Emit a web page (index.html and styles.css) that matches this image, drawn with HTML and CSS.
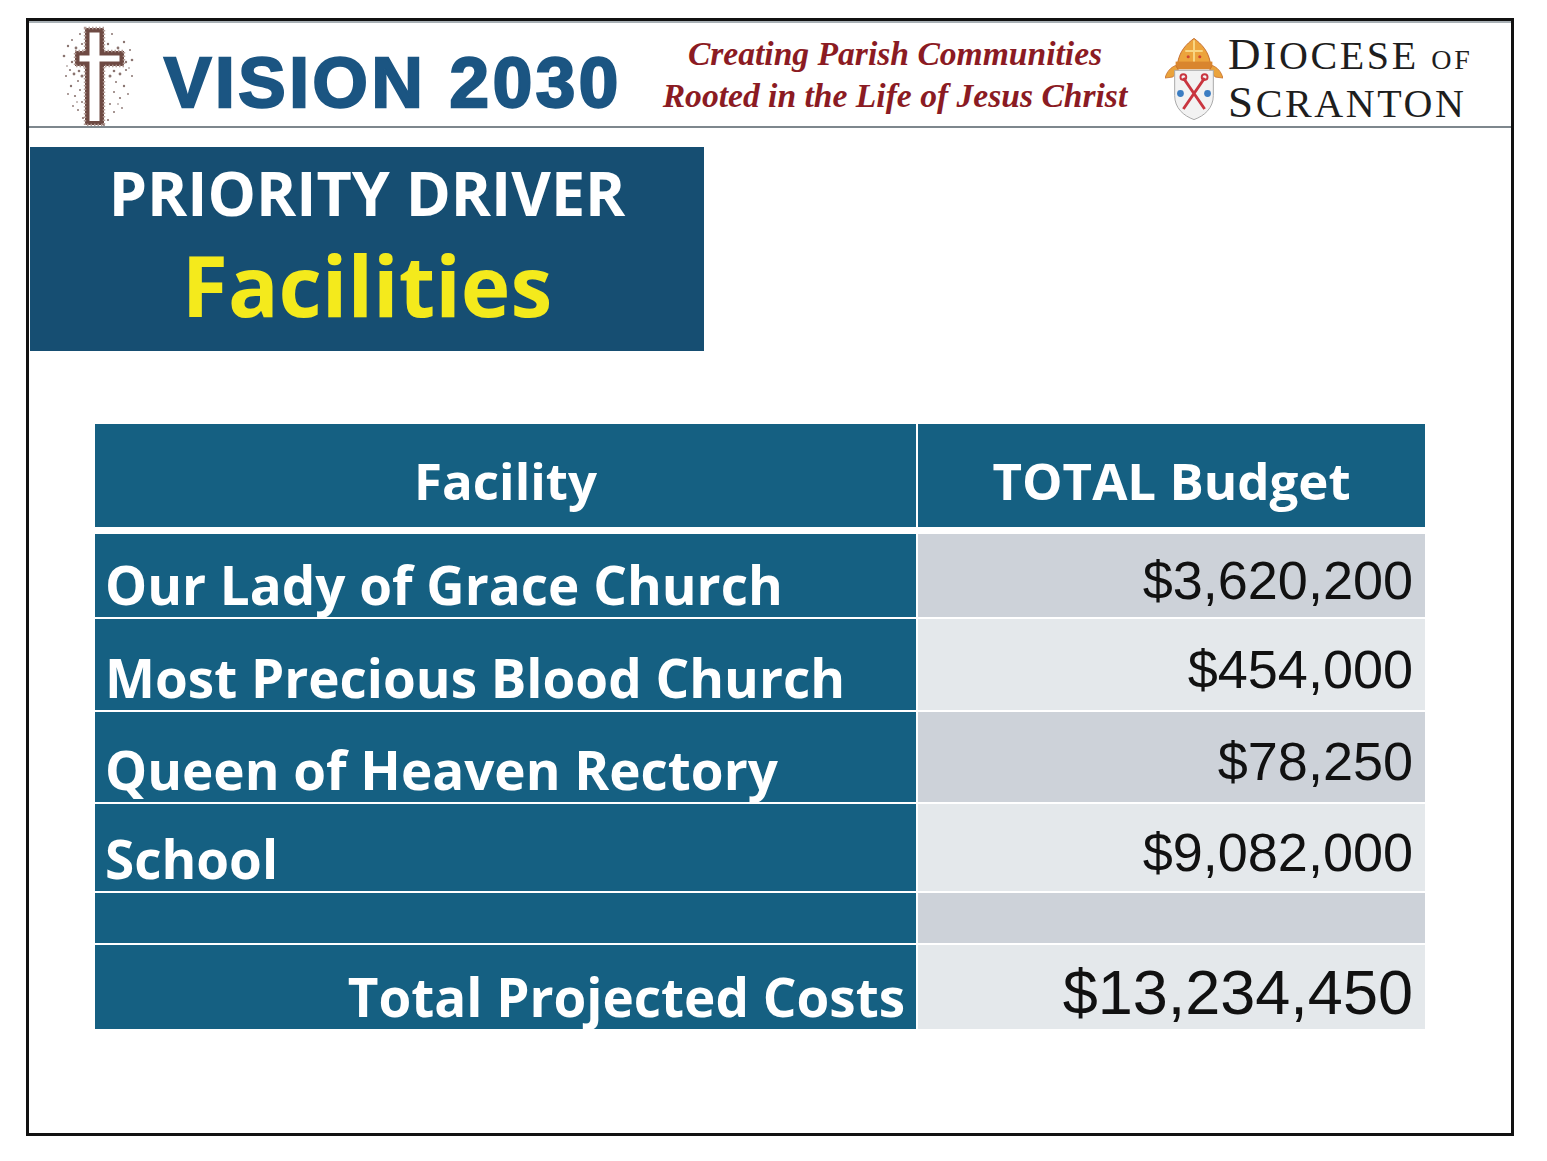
FILE: index.html
```html
<!DOCTYPE html>
<html lang="en">
<head>
<meta charset="utf-8">
<title>Vision 2030 - Priority Driver: Facilities</title>
<link rel="stylesheet" href="styles.css">
</head>
<body>
<div class="frame">
  <header class="banner">
    <div class="brand">
      <svg class="cross" viewBox="0 0 80 100" width="80" height="100" aria-hidden="true">
        <g fill="#8a7470">
          <circle cx="10" cy="20" r="1.2"/><circle cx="14" cy="14" r="1"/><circle cx="6" cy="30" r="1.3"/>
          <circle cx="12" cy="44" r="1.1"/><circle cx="8" cy="50" r="1"/><circle cx="16" cy="48" r="1.4"/>
          <circle cx="20" cy="55" r="1"/><circle cx="13" cy="60" r="1.2"/><circle cx="22" cy="64" r="1"/>
          <circle cx="17" cy="70" r="1.1"/><circle cx="24" cy="76" r="1"/><circle cx="10" cy="68" r="0.9"/>
          <circle cx="20" cy="84" r="1"/><circle cx="25" cy="92" r="1.1"/><circle cx="15" cy="80" r="0.9"/>
          <circle cx="66" cy="16" r="1.2"/><circle cx="72" cy="24" r="1"/><circle cx="74" cy="34" r="1.3"/>
          <circle cx="68" cy="44" r="1.1"/><circle cx="74" cy="50" r="1"/><circle cx="62" cy="48" r="1.4"/>
          <circle cx="58" cy="56" r="1"/><circle cx="66" cy="60" r="1.2"/><circle cx="56" cy="66" r="1"/>
          <circle cx="62" cy="72" r="1.1"/><circle cx="52" cy="78" r="1"/><circle cx="70" cy="68" r="0.9"/>
          <circle cx="56" cy="86" r="1"/><circle cx="50" cy="94" r="1.1"/><circle cx="64" cy="82" r="0.9"/>
          <circle cx="22" cy="8" r="1"/><circle cx="54" cy="8" r="1"/><circle cx="50" cy="18" r="1.2"/>
          <circle cx="24" cy="18" r="1.1"/><circle cx="30" cy="98" r="1"/><circle cx="46" cy="99" r="1"/>
          <circle cx="18" cy="22" r="1.4"/><circle cx="60" cy="22" r="1.4"/><circle cx="14" cy="36" r="1.2"/>
          <circle cx="68" cy="36" r="1.2"/><circle cx="21" cy="45" r="1.3"/><circle cx="56" cy="45" r="1.3"/>
          <circle cx="24" cy="50" r="1.5"/><circle cx="52" cy="50" r="1.5"/><circle cx="19" cy="76" r="0.8"/>
          <circle cx="60" cy="78" r="0.8"/><circle cx="9" cy="40" r="0.8"/><circle cx="71" cy="42" r="0.8"/>
        </g>
        <path d="M27 2 H46 V25 H66 V40 H46 V99 H27 V40 H17 V25 H27 Z" fill="#6e4a43"/>
        <path d="M27 2 H46 V25 H66 V40 H46 V99 H27 V40 H17 V25 H27 Z" fill="none" stroke="#b29c96" stroke-width="2.4" stroke-dasharray="1.5 2"/>
        <path d="M31.5 6.5 H41.5 V29.5 H61.5 V35.5 H41.5 V95 H31.5 V35.5 H21.5 V29.5 H31.5 Z" fill="#ffffff"/>
      </svg>
      <span class="vision">VISION 2030</span>
    </div>
    <div class="tagline">
      <div>Creating Parish Communities</div>
      <div>Rooted in the Life of Jesus Christ</div>
    </div>
    <div class="diocese">
      <svg class="shield" viewBox="0 0 60 86" width="58" height="84" aria-hidden="true">
        <path d="M30 1 C22 7 15 14 13 27 L47 27 C45 14 38 7 30 1 Z" fill="#eca43d" stroke="#c46b2a" stroke-width="1"/>
        <path d="M30 3 L30 27 M21 14 L39 14" stroke="#f8d684" stroke-width="2"/>
        <circle cx="24" cy="20" r="1.6" fill="#d0452f"/><circle cx="36" cy="20" r="1.6" fill="#d0452f"/>
        <rect x="11" y="25" width="38" height="8" fill="#d9852e"/>
        <path d="M11 29 C6 31 2 35 0 42 L8 41 L14 34 Z" fill="#eaa33c" stroke="#c46b2a" stroke-width="0.8"/>
        <path d="M49 29 C54 31 58 35 60 42 L52 41 L46 34 Z" fill="#eaa33c" stroke="#c46b2a" stroke-width="0.8"/>
        <path d="M10 34 H50 V60 C50 73 41 81 30 85 C19 81 10 73 10 60 Z" fill="#f2f2f2" stroke="#a7a7a7" stroke-width="1"/>
        <path d="M19 42 L41 74 M41 42 L19 74" stroke="#c9353f" stroke-width="3"/>
        <circle cx="19" cy="41" r="3" fill="none" stroke="#c9353f" stroke-width="2"/>
        <circle cx="41" cy="41" r="3" fill="none" stroke="#c9353f" stroke-width="2"/>
        <circle cx="16" cy="58" r="3.5" fill="#3b7dc2"/>
        <circle cx="44" cy="58" r="3.5" fill="#3b7dc2"/>
      </svg>
      <div class="diocese-name">
        <div><span class="cap">D</span>IOCESE <span class="sc">OF</span></div>
        <div><span class="cap">S</span>CRANTON</div>
      </div>
    </div>
  </header>

  <section class="driver">
    <div class="driver-label">PRIORITY DRIVER</div>
    <div class="driver-name">Facilities</div>
  </section>

  <section class="budget">
    <div class="thead">
      <div class="th">Facility</div>
      <div class="th">TOTAL Budget</div>
    </div>
    <div class="tbody">
      <div class="name">Our Lady of Grace Church</div>
      <div class="amount dark">$3,620,200</div>
      <div class="name">Most Precious Blood Church</div>
      <div class="amount light">$454,000</div>
      <div class="name">Queen of Heaven Rectory</div>
      <div class="amount dark">$78,250</div>
      <div class="name">School</div>
      <div class="amount light">$9,082,000</div>
      <div class="name"></div>
      <div class="amount dark"></div>
      <div class="name total-label">Total Projected Costs</div>
      <div class="amount light total">$13,234,450</div>
    </div>
  </section>
</div>
</body>
</html>
```

FILE: styles.css
```css
html, body {
  margin: 0;
  padding: 0;
  background: #ffffff;
}

.frame {
  box-sizing: border-box;
  margin: 18px 0 0 26px;
  width: 1488px;
  height: 1118px;
  border: 3px solid #111111;
  background: #ffffff;
}

/* ---------- banner ---------- */
.banner {
  box-sizing: border-box;
  height: 107px;
  border-top: 2px solid #a9b1b6;
  border-bottom: 2px solid #7e878d;
  display: flex;
  align-items: flex-start;
}

.brand {
  width: 631px;
  display: flex;
  align-items: flex-start;
}

.cross {
  margin: 3px 0 0 29px;
  flex: none;
}

.vision {
  margin: 24px 0 0 26px;
  font-family: "Liberation Sans", Arial, sans-serif;
  font-weight: 700;
  font-size: 71px;
  line-height: 71px;
  letter-spacing: 3.6px;
  color: #1b5582;
  -webkit-text-stroke: 2.4px #1b5582;
  white-space: nowrap;
}

.tagline {
  width: 470px;
  margin-top: 10px;
  text-align: center;
  font-family: "Liberation Serif", "Times New Roman", serif;
  font-style: italic;
  font-weight: 700;
  font-size: 33.6px;
  line-height: 42px;
  color: #8b1b23;
  white-space: nowrap;
}

.diocese {
  display: flex;
  align-items: flex-start;
  margin-left: 35px;
}

.shield {
  margin-top: 14px;
  flex: none;
}

.diocese-name {
  margin: 10px 0 0 5px;
  font-family: "Liberation Serif", "Times New Roman", serif;
  font-size: 40px;
  line-height: 43px;
  letter-spacing: 2.6px;
  color: #1e1e1e;
  white-space: nowrap;
}

.diocese-name .cap {
  font-size: 45px;
}

.diocese-name .sc {
  font-size: 28px;
}

/* ---------- priority driver ---------- */
.driver {
  box-sizing: border-box;
  margin: 19px 0 0 1px;
  width: 674px;
  height: 204px;
  padding-top: 8px;
  background: #164e72;
  text-align: center;
  font-family: "Open Sans", "Noto Sans", sans-serif;
  font-weight: 700;
}

.driver-label {
  font-size: 61px;
  line-height: 76px;
  color: #ffffff;
}

.driver-name {
  font-size: 84px;
  line-height: 107px;
  color: #f4ea1c;
}

/* ---------- budget table ---------- */
.budget {
  margin: 73px 0 0 66px;
  width: 1330px;
  font-family: "Open Sans", "Noto Sans", sans-serif;
}

.thead,
.tbody {
  display: grid;
  grid-template-columns: 821px 507px;
  column-gap: 2px;
}

.thead {
  height: 103px;
}

.th {
  display: flex;
  align-items: center;
  justify-content: center;
  padding-top: 8px;
  box-sizing: border-box;
  background: #156082;
  color: #ffffff;
  font-weight: 700;
  font-size: 51px;
}

.tbody {
  margin-top: 7px;
  row-gap: 2px;
  grid-template-rows: 83px 91px 90px 87px 50px 84px;
}

.name {
  display: flex;
  align-items: flex-end;
  box-sizing: border-box;
  padding: 0 11px 6px 10px;
  background: #156082;
  color: #ffffff;
  font-weight: 700;
  font-size: 53px;
  line-height: 1;
  white-space: nowrap;
}

.total-label {
  justify-content: flex-end;
}

.amount {
  display: flex;
  align-items: center;
  justify-content: flex-end;
  box-sizing: border-box;
  padding: 8px 12px 0 0;
  font-family: "Liberation Sans", Arial, sans-serif;
  font-size: 54px;
  color: #111111;
  white-space: nowrap;
}

.amount.total {
  font-size: 63px;
  padding-top: 10px;
}

.dark {
  background: #cdd2d9;
}

.light {
  background: #e4e8eb;
}
```
